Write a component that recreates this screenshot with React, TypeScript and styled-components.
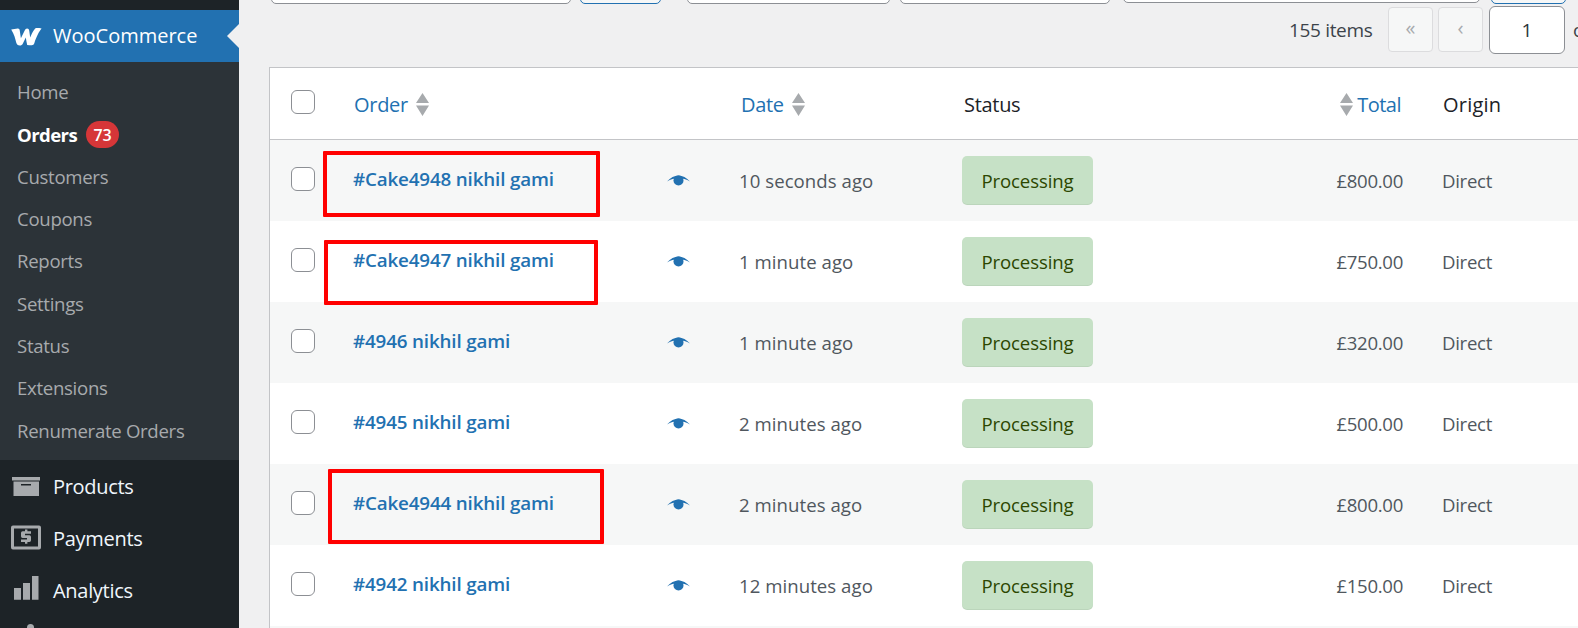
import React from "react";
import styled, { createGlobalStyle } from "styled-components";

const Global = createGlobalStyle`
  html, body { margin: 0; padding: 0; height: 628px; overflow: hidden; background: #f0f0f1; }
  * { box-sizing: border-box; }
  body { font-family: "Open Sans", "Noto Sans", sans-serif; }
`;

const Page = styled.div`
  display: flex;
  width: 1578px;
  height: 628px;
  overflow: hidden;
  background: #f0f0f1;
`;

/* ---------- sidebar ---------- */
const Sidebar = styled.nav`
  flex: 0 0 239px;
  height: 628px;
  background: #1d2327;
  padding-top: 10px;
  overflow: hidden;
`;
const CurrentItem = styled.div`
  position: relative;
  height: 52px;
  background: #2271b1;
  color: #fff;
  display: flex;
  align-items: center;
  gap: 11px;
  padding-left: 11px;
  padding-bottom: 1px;
  font-size: 20px;
  letter-spacing: 0;
  &::after {
    content: "";
    position: absolute;
    right: 0;
    top: 14px;
    border: 12px solid transparent;
    border-right-color: #f0f0f1;
    border-left-width: 0;
  }
`;
const SubMenu = styled.ul`
  list-style: none;
  margin: 0;
  height: 398px;
  padding: 8.5px 0 0 17px;
  background: #2c3338;
`;
const SubItem = styled.li<{ $active?: boolean }>`
  height: 42.3px;
  display: flex;
  align-items: center;
  gap: 9px;
  padding-top: ${(p) => (p.$active ? "2px" : "0")};
  font-size: 18.6px;
  letter-spacing: ${(p) => (p.$active ? "-0.6px" : "-0.3px")};
  font-weight: ${(p) => (p.$active ? 700 : 400)};
  color: ${(p) => (p.$active ? "#fff" : "#a7aaad")};
`;
const Badge = styled.span`
  display: inline-flex;
  align-items: center;
  justify-content: center;
  width: 33px;
  height: 27px;
  border-radius: 14px;
  background: #d63638;
  color: #fff;
  font-size: 16px;
  font-weight: 600;
  letter-spacing: 0;
`;
const MainItem = styled.div`
  height: 51.7px;
  display: flex;
  align-items: center;
  gap: 11px;
  padding-left: 11px;
  color: #f0f6fc;
  font-size: 20px;
  letter-spacing: -0.3px;
`;
const MainLabel = styled.span`
  margin-top: 2px;
`;
const IconSlot = styled.svg`
  flex: 0 0 31px;
  width: 31px;
  height: 28px;
  fill: #a7aaad;
`;

/* ---------- main ---------- */
const Main = styled.main`
  flex: 1 1 auto;
  min-width: 0;
  padding-left: 30px;
  overflow: hidden;
`;
const Filters = styled.div`
  display: flex;
  align-items: flex-end;
  height: 4px;
  padding-left: 2px;
  width: 1309px;
`;
const FilterBox = styled.div<{ $w: number; $ml?: number; $blue?: boolean; $up?: number }>`
  flex: 0 0 ${(p) => p.$w}px;
  height: 30px;
  margin-left: ${(p) => p.$ml ?? 0}px;
  margin-bottom: ${(p) => p.$up ?? 0}px;
  background: ${(p) => (p.$blue ? "#f6f7f7" : "#fff")};
  border: 1px solid ${(p) => (p.$blue ? "#2271b1" : "#8c8f94")};
  border-radius: 5px;
`;
const Pager = styled.div`
  display: flex;
  align-items: center;
  height: 63px;
  padding-left: 1020px;
  width: 1400px;
  padding-bottom: 12px;
`;
const Count = styled.span`
  width: 99px;
  font-size: 19px;
  letter-spacing: -0.33px;
  color: #3c434a;
  white-space: nowrap;
`;
const PageBtn = styled.span`
  flex: 0 0 45px;
  height: 45px;
  margin-right: 5px;
  border: 1px solid #dcdcde;
  border-radius: 4px;
  background: #f6f7f7;
  color: #a7aaad;
  display: flex;
  align-items: center;
  justify-content: center;
  font-size: 20px;
  padding-bottom: 4px;
`;
const PageInput = styled.span`
  flex: 0 0 76px;
  height: 48px;
  margin-left: 1px;
  border: 1px solid #8c8f94;
  border-radius: 6px;
  background: #fff;
  color: #2c3338;
  display: flex;
  align-items: center;
  justify-content: center;
  font-size: 19px;
`;
const Of = styled.span`
  margin-left: 8px;
  font-size: 18.6px;
  color: #3c434a;
`;

const Table = styled.div`
  width: 1309px;
  background: #fff;
  border: 1px solid #c3c4c7;
  border-right: 0;
  border-bottom: 0;
`;
const cols = "84px 284px 103px 221px 238px 203px 1fr";
const HeaderRow = styled.div`
  display: grid;
  grid-template-columns: ${cols};
  align-items: center;
  height: 72px;
  border-bottom: 1px solid #c3c4c7;
  font-size: 20px;
  letter-spacing: -0.3px;
`;
const Row = styled.div<{ $alt?: boolean }>`
  display: grid;
  grid-template-columns: ${cols};
  align-items: center;
  height: 81px;
  background: ${(p) => (p.$alt ? "#f6f7f7" : "#fff")};
  font-size: 18.6px;
  letter-spacing: -0.3px;
  color: #50575e;
`;
const CheckCell = styled.div`
  padding-left: 21px;
  padding-bottom: 3px;
  display: flex;
`;
const Check = styled.span`
  display: block;
  width: 24px;
  height: 24px;
  border: 1px solid #8c8f94;
  border-radius: 6px;
  background: #fff;
`;
const SortLink = styled.div`
  display: flex;
  align-items: center;
  gap: 8px;
  color: #2271b1;
  margin-top: 1px;
`;
const HeadText = styled.div<{ $origin?: boolean }>`
  color: #1d2327;
  margin-top: 1px;
  margin-left: ${(p) => (p.$origin ? "40px" : "2px")};
  letter-spacing: ${(p) => (p.$origin ? "0.2px" : "-0.3px")};
`;
const TotalHead = styled(SortLink)`
  justify-content: flex-end;
  gap: 4px;
  padding-right: 2px;
  letter-spacing: -0.5px;
`;
const OrderLink = styled.div`
  color: #2271b1;
  font-weight: 600;
  padding-bottom: 4px;
  margin-left: -1px;
  letter-spacing: -0.15px;
  font-size: 18.8px;
`;
const EyeCell = styled.div`
  padding-left: 29px;
  padding-bottom: 4px;
  display: flex;
`;
const DateCell = styled.div`
  margin-left: -2px;
  letter-spacing: 0.05px;
`;
const Pill = styled.span`
  display: inline-flex;
  align-items: center;
  justify-content: center;
  width: 131px;
  height: 49px;
  margin-top: -1px;
  background: #c6e1c6;
  color: #2c4700;
  border-radius: 5px;
  letter-spacing: -0.1px;
  box-shadow: inset 0 -1px 0 rgba(0, 0, 0, 0.05);
`;
const Money = styled.div`
  text-align: right;
`;
const Origin = styled.div`
  padding-left: 39px;
`;

/* annotation boxes lying over the table */
const Annotation = styled.div<{ $x: number; $y: number; $w: number; $h: number }>`
  position: absolute;
  left: ${(p) => p.$x}px;
  top: ${(p) => p.$y}px;
  width: ${(p) => p.$w}px;
  height: ${(p) => p.$h}px;
  border: 4px solid #ff0000;
  border-radius: 1px;
`;

const WooLogo = () => (
  <IconSlot viewBox="0 0 31 28" style={{ fill: "#fff" }}>
    <path d="M0.2 7.6C2.4 6.9 4.6 6.5 6.7 6.4 8 6.3 8.5 7 8.7 8.3L9.9 16.2 13.7 8.4C14.3 7.1 15 6.4 16.1 6.4 17.3 6.4 18 7.2 18.2 8.5L19.2 15.6C20.4 12.2 21.8 9.3 23.6 7.2 24.3 6.4 25 6.1 26 6.1 27.4 6.1 29.2 6.2 30.6 6.6 28 9.6 25.2 15.3 23.4 21 22.9 22.6 22 23.2 20.8 23.2 19.2 23.2 17.6 23.2 16.2 23 15.6 20.8 15.2 17.6 14.8 15.6L11.9 21.4C11.2 22.8 10.2 23.4 8.9 23.4 6.7 23.4 5.8 22.7 5.2 20.6 4.3 17.1 3.4 12.6 0.2 7.6Z" />
  </IconSlot>
);
const BoxIcon = () => (
  <IconSlot viewBox="0 0 31 28">
    <path d="M1 5h28v3.500H1z" />
    <path fillRule="evenodd" d="M2.500 9.500h25.500V24H2.500zM10 12v1.500h10V12z" />
  </IconSlot>
);
const MoneyIcon = () => (
  <IconSlot viewBox="0 0 31 28">
    <path fillRule="evenodd" d="M2 1.500h26a2 2 0 0 1 2 2v20a2 2 0 0 1-2 2H2a2 2 0 0 1-2-2v-20a2 2 0 0 1 2-2zm1 3v18h24v-18z" />
    <path d="M14 5.500h2.400v1.700h3.600v2.500h-6v1.500h4.400a1.700 1.700 0 0 1 1.600 1.700v3.300a1.700 1.700 0 0 1-1.600 1.700h-2v1.800H14v-1.800h-4v-2.500h6v-1.500h-4.400a1.700 1.700 0 0 1-1.600-1.700V8.900a1.700 1.700 0 0 1 1.600-1.700h2.400z" />
  </IconSlot>
);
const BarsIcon = () => (
  <IconSlot viewBox="0 0 31 28">
    <path d="M3 13h7v11.700H3zM12 8h7v16.700h-7zM21 1h6.500v23.700H21z" />
  </IconSlot>
);
const PinStub = styled.div`
  height: 30px;
  padding: 9px 0 0 27px;
`;
const PinDot = styled.span`
  display: block;
  width: 7px;
  height: 7px;
  border-radius: 50%;
  background: #a7aaad;
`;

const SortArrows = () => (
  <svg width="13" height="23" viewBox="0 0 13 23" fill="#a7aaad">
    <path d="M6.500 0 13 10H0zM6.500 23 13 12.500H0z" />
  </svg>
);
const Eye = () => (
  <svg width="23" height="22" viewBox="0 0 23 22" fill="#2271b1">
    <path d="M0 13.500C3.500 9.500 7.500 7.500 11.500 7.500S19.500 9.500 23 13.500C19.500 11.300 15.500 10.300 11.500 10.300S3.500 11.300 0 13.500Z" />
    <circle cx="11.500" cy="12.500" r="5" />
  </svg>
);

const orders = [
  { o: "#Cake4948 nikhil gami", d: "10 seconds ago", t: "£800.00" },
  { o: "#Cake4947 nikhil gami", d: "1 minute ago", t: "£750.00" },
  { o: "#4946 nikhil gami", d: "1 minute ago", t: "£320.00" },
  { o: "#4945 nikhil gami", d: "2 minutes ago", t: "£500.00" },
  { o: "#Cake4944 nikhil gami", d: "2 minutes ago", t: "£800.00" },
  { o: "#4942 nikhil gami", d: "12 minutes ago", t: "£150.00" },
];
const sub = ["Home", "Orders", "Customers", "Coupons", "Reports", "Settings", "Status", "Extensions", "Renumerate Orders"];

export default function App() {
  return (
    <Page>
      <Global />
      <Sidebar>
        <CurrentItem>
          <WooLogo />
          WooCommerce
        </CurrentItem>
        <SubMenu>
          {sub.map((s) =>
            s === "Orders" ? (
              <SubItem key={s} $active>
                {s}
                <Badge>73</Badge>
              </SubItem>
            ) : (
              <SubItem key={s}>{s}</SubItem>
            )
          )}
        </SubMenu>
        <MainItem><BoxIcon /><MainLabel>Products</MainLabel></MainItem>
        <MainItem><MoneyIcon /><MainLabel>Payments</MainLabel></MainItem>
        <MainItem><BarsIcon /><MainLabel>Analytics</MainLabel></MainItem>
        <PinStub><PinDot /></PinStub>
      </Sidebar>
      <Main>
        <Filters>
          <FilterBox $w={300} />
          <FilterBox $w={81} $ml={9} $blue />
          <FilterBox $w={203} $ml={26} />
          <FilterBox $w={210} $ml={10} />
          <FilterBox $w={357} $ml={13} $up={1} />
          <FilterBox $w={75} $ml={11} $blue />
        </Filters>
        <Pager>
          <Count>155 items</Count>
          <PageBtn>«</PageBtn>
          <PageBtn>‹</PageBtn>
          <PageInput>1</PageInput>
          <Of>of 8</Of>
        </Pager>
        <Table>
          <HeaderRow>
            <CheckCell><Check /></CheckCell>
            <SortLink>Order <SortArrows /></SortLink>
            <div />
            <SortLink>Date <SortArrows /></SortLink>
            <HeadText>Status</HeadText>
            <TotalHead><SortArrows />Total</TotalHead>
            <HeadText $origin>Origin</HeadText>
          </HeaderRow>
          {orders.map((r, i) => (
            <Row key={r.o} $alt={i % 2 === 0}>
              <CheckCell><Check /></CheckCell>
              <OrderLink>{r.o}</OrderLink>
              <EyeCell><Eye /></EyeCell>
              <DateCell>{r.d}</DateCell>
              <div><Pill>Processing</Pill></div>
              <Money>{r.t}</Money>
              <Origin>Direct</Origin>
            </Row>
          ))}
          <Row $alt />
        </Table>
      </Main>
      <Annotation $x={323} $y={151} $w={277} $h={66} />
      <Annotation $x={324} $y={240} $w={274} $h={65} />
      <Annotation $x={328} $y={469} $w={276} $h={75} />
    </Page>
  );
}
